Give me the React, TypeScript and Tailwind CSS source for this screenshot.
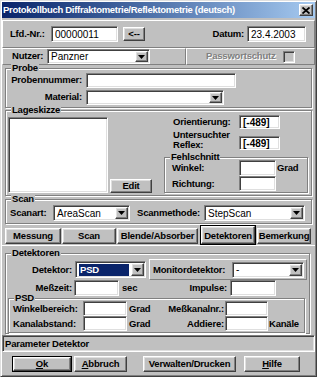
import React from 'react';

const raised =
  'border border-t-white border-l-white border-r-[#404040] border-b-[#404040] shadow-[inset_-1px_-1px_0_#808080,inset_1px_1px_0_#dfdfdf]';
const thin = 'border border-t-white border-l-white border-r-[#808080] border-b-[#808080]';
const sunken =
  'border border-t-[#808080] border-l-[#808080] border-r-white border-b-white shadow-[inset_1px_1px_0_#404040,inset_-1px_-1px_0_#dfdfdf]';

function Field({ className = '', children }: { className?: string; children?: React.ReactNode }) {
  return (
    <div
      className={`bg-white ${sunken} flex items-center px-[3px] whitespace-nowrap overflow-hidden font-normal text-[10px] tracking-normal ${className}`}
    >
      {children}
    </div>
  );
}

function Combo({ className = '', value, selected }: { className?: string; value?: string; selected?: boolean }) {
  return (
    <div className={`bg-white ${sunken} flex items-stretch p-[1px] ${className}`}>
      <div className="flex-1 flex items-center px-[2px] overflow-hidden whitespace-nowrap">
        {selected ? (
          <span className="flex-1 bg-[#0a246a] text-white px-[1px] leading-[12px]">{value}</span>
        ) : (
          <span className="font-normal text-[10px] tracking-normal">{value}</span>
        )}
      </div>
      <div className={`w-[13px] bg-[#c0c0c0] ${raised} flex items-center justify-center`}>
        <svg width="7" height="4" viewBox="0 0 7 4">
          <path d="M0 0h7L3.5 4z" fill="#000" />
        </svg>
      </div>
    </div>
  );
}

function Button({ className = '', children }: { className?: string; children: React.ReactNode }) {
  return (
    <div className={`bg-[#c0c0c0] ${raised} flex items-center justify-center whitespace-nowrap ${className}`}>{children}</div>
  );
}

function Group({ label, className = '', children }: { label: string; className?: string; children: React.ReactNode }) {
  return (
    <fieldset className={`border border-[#808080] shadow-[inset_1px_1px_0_#fff,1px_1px_0_#fff] ${className}`}>
      <legend className="ml-[5px] px-[1px] leading-[10px] bg-[#c0c0c0]">{label}</legend>
      {children}
    </fieldset>
  );
}

export default function App() {
  return (
    <div className="w-[317px] h-[377px] overflow-hidden bg-[#c0c0c0] font-['Liberation_Sans',Arial,sans-serif] font-bold text-[9.5px] tracking-[-0.2px] text-black">
      <div className="h-[377px] flex flex-col p-[1px] border border-t-[#dfdfdf] border-l-[#dfdfdf] border-r-[#404040] border-b-[#404040] shadow-[inset_1px_1px_0_#fff,inset_-1px_-1px_0_#808080]">
        {/* title bar */}
        <div className="h-[16px] flex items-center justify-between bg-linear-to-r from-[#0a246a] to-[#a6caf0] pl-[1px] pr-[2px]">
          <span className="text-white text-[9.5px] tracking-[-0.3px] leading-none">
            Protokollbuch Diffraktometrie/Reflektometrie (deutsch)
          </span>
          <Button className="w-[14px] h-[12px]">
            <svg width="8" height="7" viewBox="0 0 8 7">
              <path d="M0.5 0.5L7.5 6.5M7.5 0.5L0.5 6.5" stroke="#000" strokeWidth="1.8" />
            </svg>
          </Button>
        </div>

        {/* Lfd.-Nr. / Datum */}
        <div className={`mt-[2px] h-[28px] flex items-center ${thin}`}>
          <span className="w-[48px] pl-[7px]">Lfd.-Nr.:</span>
          <Field className="w-[67px] h-[16px]">00000011</Field>
          <Button className="ml-[5px] w-[22px] h-[14px]">&lt;--</Button>
          <span className="ml-auto pr-[3px]">Datum:</span>
          <Field className="w-[59px] h-[16px] mr-[8px]">23.4.2003</Field>
        </div>

        {/* Nutzer / Passwortschutz */}
        <div className="h-[17px] flex">
          <div className={`w-[184px] flex items-center ${thin}`}>
            <span className="w-[44px] pl-[9px]">Nutzer:</span>
            <Combo className="w-[103px] h-[15px]" value="Panzner" />
          </div>
          <div className={`flex-1 flex items-center ${thin}`}>
            <span className="w-[96px] pl-[19px] text-[#808080] [text-shadow:1px_1px_0_#fff]">Passwortschutz</span>
            <div className={`w-[12px] h-[12px] bg-[#c0c0c0] ${sunken}`} />
          </div>
        </div>

        {/* Probe */}
        <Group label="Probe" className="mx-[3px] mt-[-2px] pb-[2px]">
          <div className="flex items-center">
            <span className="w-[80px] text-right pr-[4px]">Probennummer:</span>
            <Field className="w-[150px] h-[15px]" />
          </div>
          <div className="flex items-center mt-[2px]">
            <span className="w-[80px] text-right pr-[4px]">Material:</span>
            <Combo className="w-[138px] h-[15px]" />
          </div>
        </Group>

        {/* Lageskizze */}
        <Group label="Lageskizze" className="mx-[3px] mt-[-3px] pb-[2px]">
          <div className="flex items-stretch">
            <div className={`ml-[2px] mt-[2px] w-[100px] h-[76px] bg-white ${sunken}`} />
            <Button className="self-end ml-[2px] w-[42px] h-[14px]">Edit</Button>
            <div className="ml-[12px] w-[144px] flex flex-col">
              <div className="flex items-center">
                <span className="w-[75px] pl-[9px]">Orientierung:</span>
                <Field className="w-[41px] h-[14px]">
                  <span className="font-bold">[-489]</span>
                </Field>
              </div>
              <div className="flex items-end mt-[1px]">
                <span className="w-[75px] pl-[9px] leading-[10px]">
                  Untersuchter
                  <br />
                  Reflex:
                </span>
                <Field className="w-[41px] h-[14px]">
                  <span className="font-bold">[-489]</span>
                </Field>
              </div>
              <Group label="Fehlschnitt" className="mt-[2px] w-[144px] pb-[1px]">
                <div className="mt-[-2px] flex items-center">
                  <span className="w-[74px] pl-[7px]">Winkel:</span>
                  <Field className="w-[37px] h-[16px]" />
                  <span className="ml-[1px]">Grad</span>
                </div>
                <div className="flex items-center">
                  <span className="w-[74px] pl-[7px]">Richtung:</span>
                  <Field className="w-[37px] h-[15px]" />
                </div>
              </Group>
            </div>
          </div>
        </Group>

        {/* Scan */}
        <Group label="Scan" className="mx-[3px] mt-[-2px] pt-[1px] pb-[2px]">
          <div className="flex items-center">
            <span className="w-[47px] pl-[4px]">Scanart:</span>
            <Combo className="w-[77px] h-[16px]" value="AreaScan" />
            <span className="w-[74px] pl-[7px]">Scanmethode:</span>
            <Combo className="w-[101px] h-[16px]" value="StepScan" />
          </div>
        </Group>

        {/* tabs */}
        <div className="mt-[1px] h-[20px] flex items-start pl-[3px]">
          <Button className="mt-[3px] w-[56px] h-[16px]">Messung</Button>
          <Button className="mt-[3px] ml-[1px] w-[54px] h-[16px]">Scan</Button>
          <Button className="mt-[3px] ml-[1px] w-[81px] h-[16px]">Blende/Absorber</Button>
          <div className="ml-[2px] w-[56px] h-[20px] border border-black">
            <div className={`h-full bg-[#c0c0c0] ${raised} flex items-start justify-center pt-[2px]`}>Detektoren</div>
          </div>
          <Button className="mt-[3px] ml-[1px] w-[54px] h-[16px]">Bemerkung</Button>
        </div>

        {/* tab page */}
        <div className="h-[90px] border-t border-t-white flex flex-col">
          <Group label="Detektoren" className="mx-[3px] mt-[2px] mr-[5px]">
            <div className="mt-[1px] flex items-center h-[21px]">
              <span className="w-[69px] text-right pr-[3px]">Detektor:</span>
              <Combo className="w-[71px] h-[17px]" value="PSD" selected />
              <div className={`ml-[3px] mr-[2px] flex-1 h-[21px] flex items-center ${thin}`}>
                <span className="w-[82px] pl-[3px]">Monitordetektor:</span>
                <Combo className="w-[72px] h-[16px]" value="-" />
              </div>
            </div>
            <div className="flex items-center h-[16px]">
              <span className="w-[68px] text-right pr-[2px]">Meßzeit:</span>
              <Field className="w-[45px] h-[16px]" />
              <div className="w-[111px] flex justify-between pl-[3px] pr-[3px]">
                <span>sec</span>
                <span>Impulse:</span>
              </div>
              <Field className="w-[46px] h-[16px]" />
            </div>
            <Group label="PSD" className="ml-[2px] mr-[4px] mt-[-3px] pb-[1px]">
              <div className="mt-[-2px] flex items-center h-[15px]">
                <span className="w-[74px] pl-[4px]">Winkelbereich:</span>
                <Field className="w-[44px] h-[15px]" />
                <div className="w-[98px] flex justify-between pl-[2px] pr-[1px]">
                  <span>Grad</span>
                  <span>Meßkanalnr.:</span>
                </div>
                <Field className="w-[43px] h-[15px]" />
              </div>
              <div className="flex items-center h-[15px]">
                <span className="w-[74px] pl-[4px]">Kanalabstand:</span>
                <Field className="w-[44px] h-[15px]" />
                <div className="w-[98px] flex justify-between pl-[2px] pr-[1px]">
                  <span>Grad</span>
                  <span>Addiere:</span>
                </div>
                <Field className="w-[43px] h-[15px]" />
                <span className="ml-[1px]">Kanäle</span>
              </div>
            </Group>
          </Group>
        </div>

        {/* status bar */}
        <div className={`h-[17px] flex items-center pl-[2px] ${sunken}`}>Parameter Detektor</div>

        {/* buttons */}
        <div className="mt-[4px] h-[16px] flex">
          <div className="ml-[10px] border border-black">
            <Button className="w-[58px] h-[14px]">
              <span>
                <span className="underline">O</span>k
              </span>
            </Button>
          </div>
          <Button className="ml-[2px] w-[53px] h-[16px]">
            <span>
              <span className="underline">A</span>bbruch
            </span>
          </Button>
          <Button className="ml-[16px] w-[93px] h-[16px]">Verwalten/Drucken</Button>
          <Button className="ml-[8px] w-[56px] h-[16px]">
            <span>
              <span className="underline">H</span>ilfe
            </span>
          </Button>
        </div>
      </div>
    </div>
  );
}
